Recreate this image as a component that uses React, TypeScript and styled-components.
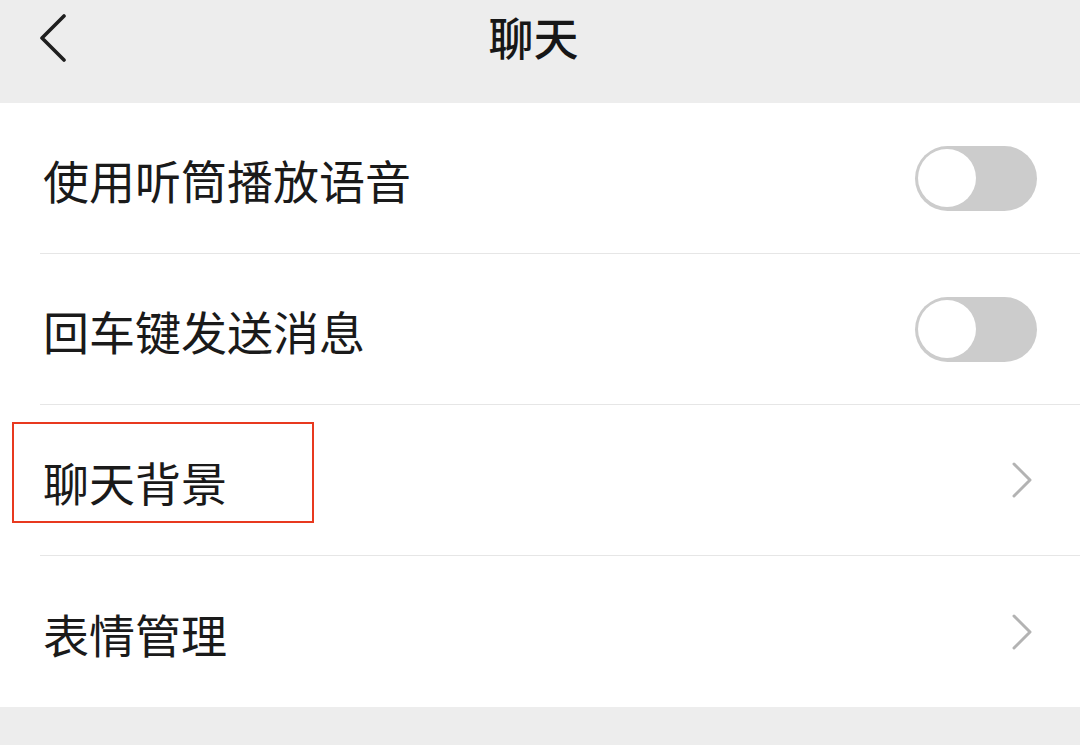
import styled, { createGlobalStyle } from "styled-components";

const GlobalStyle = createGlobalStyle`
  html, body {
    margin: 0;
    padding: 0;
    background: #ededed;
    font-family: "Noto Sans CJK SC", "Noto Sans", sans-serif;
    color: #1a1a1a;
  }
`;

type Setting = { label: string; kind: "switch" | "link"; marked?: boolean };

const SETTINGS: Setting[] = [
  { label: "使用听筒播放语音", kind: "switch" },
  { label: "回车键发送消息", kind: "switch" },
  { label: "聊天背景", kind: "link", marked: true },
  { label: "表情管理", kind: "link" },
];

export default function App() {
  return (
    <>
      <GlobalStyle />
      <St.Page>
        <St.NavBar>
          <St.BackButton aria-label="返回">
            <svg width="30" height="48" viewBox="0 0 30 48">
              <polyline points="26,2 4,24 26,46" fill="none" stroke="#1f1f1f" strokeWidth="3.6" strokeLinecap="round" strokeLinejoin="round" />
            </svg>
          </St.BackButton>
          <St.Title>聊天</St.Title>
          <span />
        </St.NavBar>

        <St.List>
          {SETTINGS.map((item, i) => (
            <St.Item key={item.label}>
              <St.ItemInner $last={i === SETTINGS.length - 1}>
                <St.Label>{item.label}</St.Label>
                {item.kind === "switch" ? (
                  <St.Switch>
                    <St.Knob />
                  </St.Switch>
                ) : (
                  <St.Arrow width="22" height="38" viewBox="0 0 22 38">
                    <polyline points="3,3 19,19 3,35" fill="none" stroke="#b3b3b3" strokeWidth="3" strokeLinecap="round" strokeLinejoin="round" />
                  </St.Arrow>
                )}
              </St.ItemInner>
              {item.marked && <St.Highlight />}
            </St.Item>
          ))}
        </St.List>
      </St.Page>
    </>
  );
}

const St = {
  Page: styled.div`
    min-height: 100vh;
    background: #ededed;
  `,

  NavBar: styled.header`
    display: grid;
    grid-template-columns: 120px 1fr 120px;
    align-items: center;
    height: 80px;
    padding-bottom: 23px;
    background: #ededed;
  `,

  BackButton: styled.div`
    display: flex;
    align-items: center;
    padding-left: 38px;
    margin-top: -4px;
  `,

  Title: styled.h1`
    margin: -8px 0 0;
    padding-right: 13px;
    text-align: center;
    font-size: 45px;
    font-weight: 500;
    color: #171717;
  `,

  List: styled.ul`
    list-style: none;
    margin: 0;
    padding: 0;
    background: #ffffff;
  `,

  Item: styled.li`
    position: relative;
    padding-left: 40px;
  `,

  ItemInner: styled.div<{ $last: boolean }>`
    display: flex;
    align-items: center;
    justify-content: space-between;
    height: ${({ $last }) => ($last ? "151px" : "150px")};
    padding-right: 43px;
    border-bottom: ${({ $last }) => ($last ? "none" : "1px solid #e6e6e6")};
  `,

  Label: styled.span`
    padding-left: 3px;
    padding-top: 2px;
    font-size: 46px;
    color: #1a1a1a;
  `,

  Switch: styled.div`
    display: flex;
    align-items: center;
    box-sizing: border-box;
    width: 122px;
    height: 65px;
    padding: 0 3px;
    border-radius: 33px;
    background: #cccccc;
  `,

  Knob: styled.div`
    width: 58px;
    height: 58px;
    border-radius: 50%;
    background: #ffffff;
  `,

  Arrow: styled.svg`
    margin-right: 4px;
  `,

  Highlight: styled.div`
    position: absolute;
    left: 12px;
    top: 17px;
    width: 302px;
    height: 101px;
    box-sizing: border-box;
    border: 2.5px solid #e8391f;
    pointer-events: none;
  `,
};
